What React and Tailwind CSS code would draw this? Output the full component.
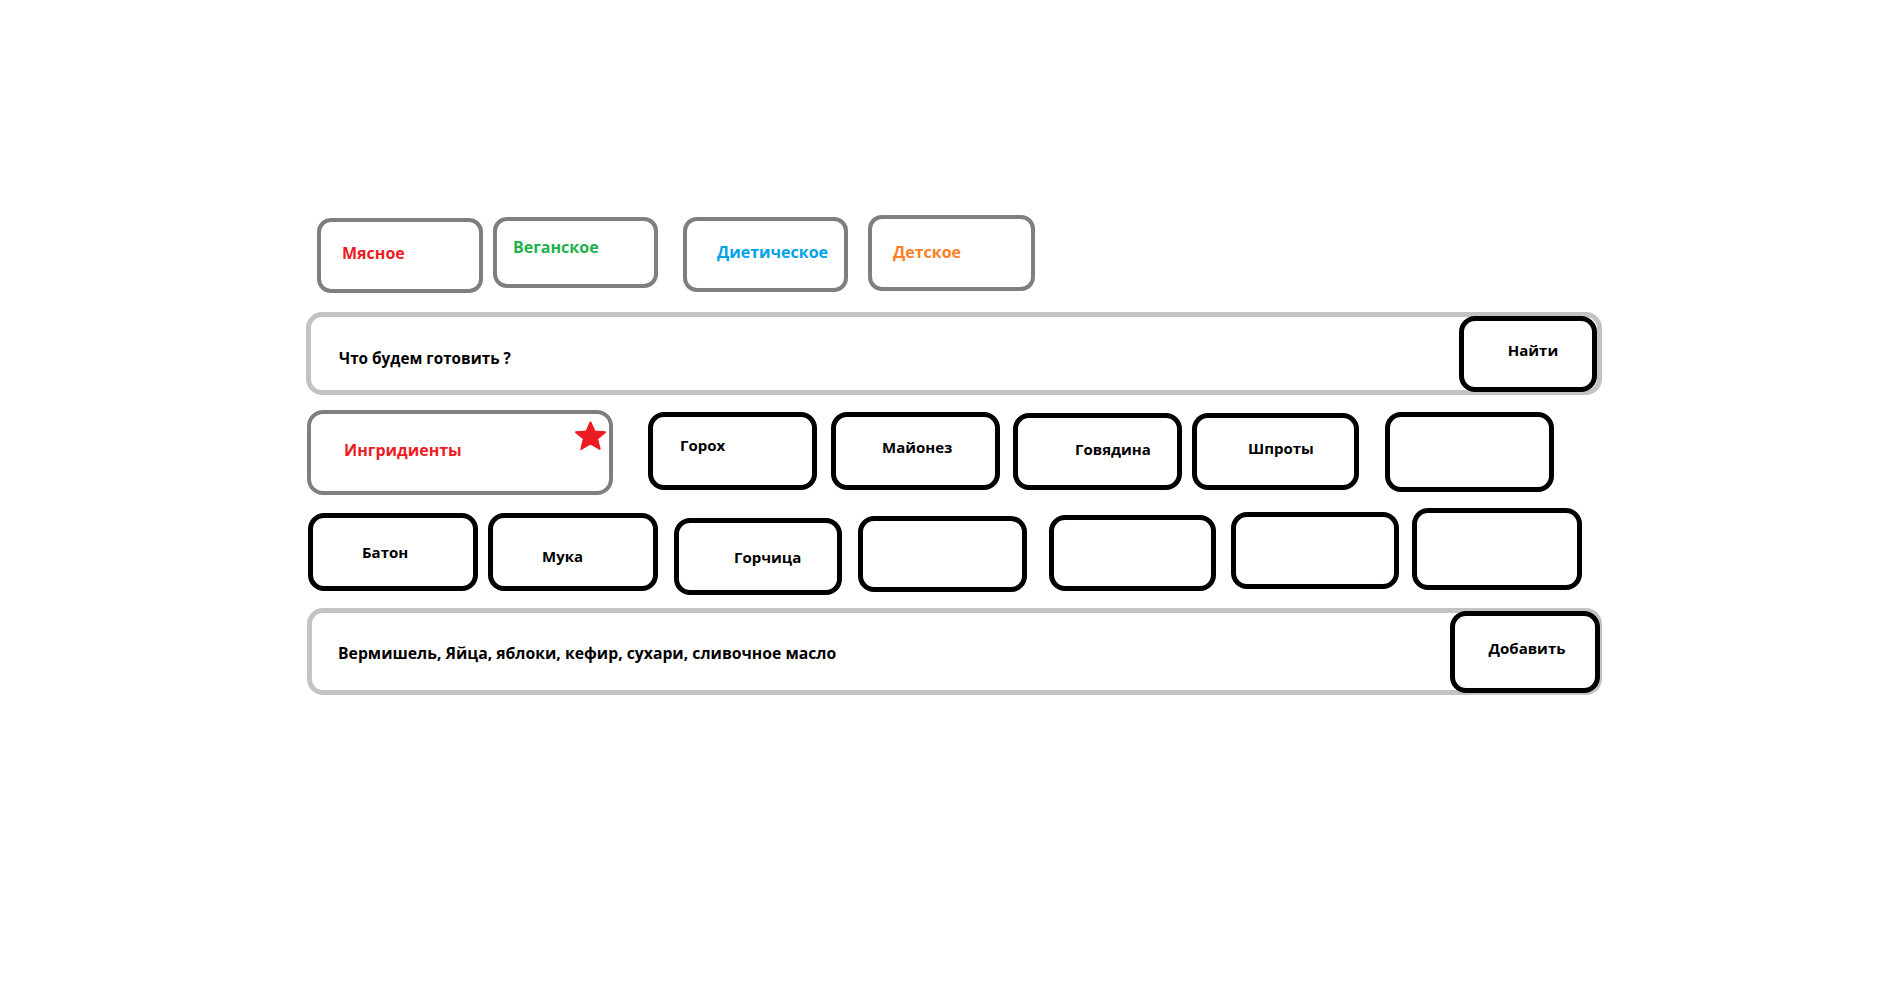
const grayTab = 'border-4 border-[#7f7f7f] rounded-[14px] bg-white shrink-0'
const blackChip = 'border-[5px] border-black rounded-[16px] bg-white shrink-0'

function Star() {
  return (
    <svg
      viewBox="0 0 34 30"
      className="absolute left-[262px] top-[7px] w-[35px] h-[30px]"
      aria-hidden="true"
    >
      <path
        d="M17 1.5 L21 10.5 L31.5 11.2 L23.6 17.8 L26.2 28 L17 22.4 L7.8 28 L10.4 17.8 L2.5 11.2 L13 10.5 Z"
        fill="#ed1c24"
        stroke="#ed1c24"
        strokeWidth="2"
        strokeLinejoin="round"
      />
    </svg>
  )
}

export default function App() {
  return (
    <div className="min-h-screen bg-white pt-[215px] pl-[306px] font-['Open_Sans',Arial,sans-serif] font-bold leading-[20px]">
      {/* категории */}
      <div className="flex items-start">
        <div className={`${grayTab} ml-[11px] mt-[3px] w-[166px] h-[75px] pl-[21px] pt-[21px] text-[16px] text-[#ed1c24]`}>
          Мясное
        </div>
        <div className={`${grayTab} ml-[10px] mt-[2px] w-[165px] h-[71px] pl-[16px] pt-[16px] text-[16px] text-[#22b14c]`}>
          Веганское
        </div>
        <div className={`${grayTab} ml-[25px] mt-[2px] w-[165px] h-[75px] pl-[30px] pt-[21px] text-[16px] text-[#00a2e8]`}>
          Диетическое
        </div>
        <div className={`${grayTab} ml-[20px] w-[167px] h-[76px] pl-[21px] pt-[23px] text-[16px] text-[#ff7f27]`}>
          Детское
        </div>
      </div>

      {/* поиск */}
      <div className="mt-[19px] w-[1296px] h-[83px] border-[5px] border-[#c3c3c3] rounded-[16px] flex items-center justify-between">
        <span className="pl-[28px] pt-[8px] text-[15.3px] text-black">Что будем готовить ?</span>
        <button className={`${blackChip} w-[138px] h-[76px] flex items-center justify-center pl-[10px] pb-[8px] text-[15px] text-black`}>
          Найти
        </button>
      </div>

      {/* ингредиенты, первый ряд */}
      <div className="mt-[15px] flex items-start">
        <div className={`${grayTab} relative rounded-[16px] ml-[1px] w-[306px] h-[85px] pl-[33px] pt-[26px] text-[16px] text-[#ed1c24]`}>
          Ингридиенты
          <Star />
        </div>
        <div className={`${blackChip} ml-[35px] mt-[2px] w-[169px] h-[78px] pl-[27px] pt-[18px] text-[15px] text-black`}>
          Горох
        </div>
        <div className={`${blackChip} ml-[14px] mt-[2px] w-[169px] h-[78px] pl-[46px] pt-[20px] text-[15px] text-black`}>
          Майонез
        </div>
        <div className={`${blackChip} ml-[13px] mt-[3px] w-[169px] h-[77px] pl-[57px] pt-[21px] text-[15px] text-black`}>
          Говядина
        </div>
        <div className={`${blackChip} ml-[10px] mt-[3px] w-[167px] h-[77px] pl-[51px] pt-[20px] text-[15px] text-black`}>
          Шпроты
        </div>
        <div className={`${blackChip} ml-[26px] mt-[2px] w-[169px] h-[80px]`} />
      </div>

      {/* второй ряд */}
      <div className="mt-[13px] flex items-start">
        <div className={`${blackChip} ml-[2px] mt-[5px] w-[170px] h-[78px] pl-[49px] pt-[24px] text-[15px] text-black`}>
          Батон
        </div>
        <div className={`${blackChip} ml-[10px] mt-[5px] w-[170px] h-[78px] pl-[49px] pt-[28px] text-[15px] text-black`}>
          Мука
        </div>
        <div className={`${blackChip} ml-[16px] mt-[10px] w-[168px] h-[77px] pl-[55px] pt-[24px] text-[15px] text-black`}>
          Горчица
        </div>
        <div className={`${blackChip} ml-[16px] mt-[8px] w-[169px] h-[76px]`} />
        <div className={`${blackChip} ml-[22px] mt-[7px] w-[167px] h-[76px]`} />
        <div className={`${blackChip} ml-[15px] mt-[4px] w-[168px] h-[77px]`} />
        <div className={`${blackChip} ml-[13px] w-[170px] h-[82px]`} />
      </div>

      {/* список и кнопка */}
      <div className="mt-[13px] ml-[1px] w-[1295px] h-[87px] border-[5px] border-[#c3c3c3] rounded-[16px] flex items-center justify-between">
        <span className="pl-[26px] pt-[2px] text-[15.75px] text-black">
          Вермишель, Яйца, яблоки, кефир, сухари, сливочное масло
        </span>
        <button className={`${blackChip} -mr-[3px] w-[150px] h-[82px] flex items-center justify-center pl-[4px] pb-[8px] text-[15px] text-black`}>
          Добавить
        </button>
      </div>
    </div>
  )
}
